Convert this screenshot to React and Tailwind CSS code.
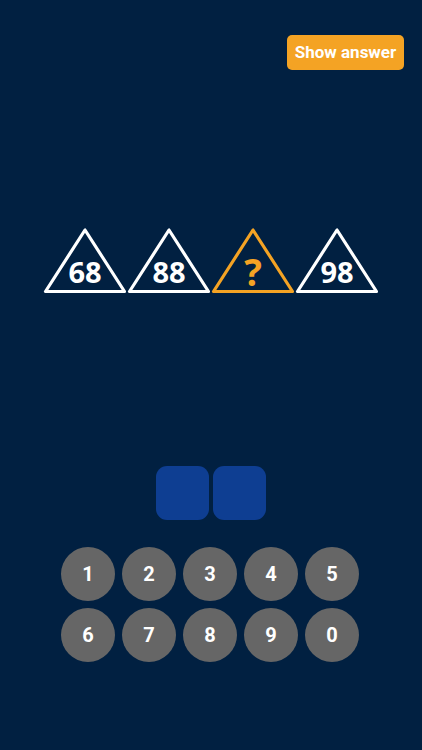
import React from "react";

function Tri({ label, color, q }) {
  return (
    <svg width="84" height="68" viewBox="0 0 84 68" className="block">
      <polygon
        points="42,3 2.5,64.5 81.5,64.5"
        fill="none"
        stroke={color}
        strokeWidth="3.2"
        strokeLinejoin="round"
      />
      <text
        x="42"
        y={q ? "59" : "56"}
        textAnchor="middle"
        fill={color}
        style={{
          fontFamily: '"Open Sans", "Noto Sans", sans-serif',
          fontWeight: 700,
          fontSize: q ? "37px" : "29px",
        }}
      >
        {label}
      </text>
    </svg>
  );
}

export default function App() {
  const rows = [
    ["1", "2", "3", "4", "5"],
    ["6", "7", "8", "9", "0"],
  ];
  return (
    <div className="w-[422px] h-[750px] bg-[#012041] flex flex-col items-center pt-[35px] font-['Roboto',sans-serif] overflow-hidden">
      <div className="self-end mr-[18px]">
        <button className="w-[117px] h-[35px] rounded-[5px] bg-[#f4a324] text-white font-bold text-[17px] leading-none">
          Show answer
        </button>
      </div>
      <div className="mt-[157px] flex">
        <Tri label="68" color="#ffffff" />
        <Tri label="88" color="#ffffff" />
        <Tri label="?" color="#f4a324" q />
        <Tri label="98" color="#ffffff" />
      </div>
      <div className="mt-[171px] flex gap-[4px]">
        <div className="w-[53px] h-[54px] rounded-[11px] bg-[#0e3e92]" />
        <div className="w-[53px] h-[54px] rounded-[11px] bg-[#0e3e92]" />
      </div>
      <div className="mt-[27px] flex flex-col gap-[7px] mr-[2px]">
        {rows.map((r, i) => (
          <div key={i} className="flex gap-[7px]">
            {r.map((d) => (
              <div
                key={d}
                className="w-[54px] h-[54px] rounded-full bg-[#666666] flex items-center justify-center text-white text-[20px] font-bold"
              >
                {d}
              </div>
            ))}
          </div>
        ))}
      </div>
    </div>
  );
}
